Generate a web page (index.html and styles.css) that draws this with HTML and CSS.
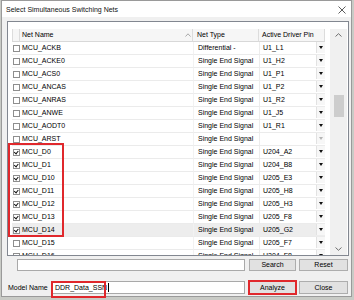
FILE: index.html
```html
<!DOCTYPE html>
<html>

<head>
  <title>Select Simultaneous Switching Nets</title>
  <link rel="stylesheet" href="styles.css">
</head>

<body>
  <div class="dialog">
    <div class="titlebar">
      <span class="title">Select Simultaneous Switching Nets</span>
      <svg class="close-x" width="8" height="8" viewBox="0 0 8 8"><path d="M0.5 0.5 L7.5 7.5 M7.5 0.5 L0.5 7.5" /></svg>
    </div>

    <div class="content">
      <div class="grid">
        <div class="list">
          <div class="row head">
            <div class="c chk"></div>
            <div class="c name">Net Name<svg class="sort" width="6" height="4" viewBox="0 0 6 4"><path d="M0.5 3.5 L3 0.8 L5.5 3.5" /></svg></div>
            <div class="c type">Net Type</div>
            <div class="c pin">Active Driver Pin</div>
          </div>

          <div class="row"><div class="c chk"><span class="box"></span></div><div class="c name">MCU_ACKB</div><div class="c type">Differential -</div><div class="c pin"><span>U1_L1</span><span class="drop"></span></div></div>
          <div class="row"><div class="c chk"><span class="box"></span></div><div class="c name">MCU_ACKE0</div><div class="c type">Single End Signal</div><div class="c pin"><span>U1_H2</span><span class="drop"></span></div></div>
          <div class="row"><div class="c chk"><span class="box"></span></div><div class="c name">MCU_ACS0</div><div class="c type">Single End Signal</div><div class="c pin"><span>U1_P1</span><span class="drop"></span></div></div>
          <div class="row"><div class="c chk"><span class="box"></span></div><div class="c name">MCU_ANCAS</div><div class="c type">Single End Signal</div><div class="c pin"><span>U1_P2</span><span class="drop"></span></div></div>
          <div class="row"><div class="c chk"><span class="box"></span></div><div class="c name">MCU_ANRAS</div><div class="c type">Single End Signal</div><div class="c pin"><span>U1_R2</span><span class="drop"></span></div></div>
          <div class="row"><div class="c chk"><span class="box"></span></div><div class="c name">MCU_ANWE</div><div class="c type">Single End Signal</div><div class="c pin"><span>U1_J5</span><span class="drop"></span></div></div>
          <div class="row"><div class="c chk"><span class="box"></span></div><div class="c name">MCU_AODT0</div><div class="c type">Single End Signal</div><div class="c pin"><span>U1_R1</span><span class="drop"></span></div></div>
          <div class="row"><div class="c chk"><span class="box"></span></div><div class="c name">MCU_ARST</div><div class="c type">Single End Signal</div><div class="c pin"><span></span><span class="drop off"></span></div></div>
          <div class="row"><div class="c chk"><span class="box on"></span></div><div class="c name">MCU_D0</div><div class="c type">Single End Signal</div><div class="c pin"><span>U204_A2</span><span class="drop"></span></div></div>
          <div class="row"><div class="c chk"><span class="box on"></span></div><div class="c name">MCU_D1</div><div class="c type">Single End Signal</div><div class="c pin"><span>U204_B8</span><span class="drop"></span></div></div>
          <div class="row"><div class="c chk"><span class="box on"></span></div><div class="c name">MCU_D10</div><div class="c type">Single End Signal</div><div class="c pin"><span>U205_E3</span><span class="drop"></span></div></div>
          <div class="row"><div class="c chk"><span class="box on"></span></div><div class="c name">MCU_D11</div><div class="c type">Single End Signal</div><div class="c pin"><span>U205_H8</span><span class="drop"></span></div></div>
          <div class="row"><div class="c chk"><span class="box on"></span></div><div class="c name">MCU_D12</div><div class="c type">Single End Signal</div><div class="c pin"><span>U205_H3</span><span class="drop"></span></div></div>
          <div class="row"><div class="c chk"><span class="box on"></span></div><div class="c name">MCU_D13</div><div class="c type">Single End Signal</div><div class="c pin"><span>U205_F8</span><span class="drop"></span></div></div>
          <div class="row selected"><div class="c chk"><span class="box on"></span></div><div class="c name">MCU_D14</div><div class="c type">Single End Signal</div><div class="c pin"><span>U205_G2</span><span class="drop"></span></div></div>
          <div class="row"><div class="c chk"><span class="box"></span></div><div class="c name">MCU_D15</div><div class="c type">Single End Signal</div><div class="c pin"><span>U205_F7</span><span class="drop"></span></div></div>
          <div class="row"><div class="c chk"><span class="box"></span></div><div class="c name">MCU_D16</div><div class="c type">Single End Signal</div><div class="c pin"><span>U204_F8</span><span class="drop"></span></div></div>
        </div>

        <div class="scrollbar">
          <div class="arrow"><svg width="7" height="4" viewBox="0 0 7 4"><path d="M0.5 3.5 L3.5 0.7 L6.5 3.5" /></svg></div>
          <div class="track"><div class="thumb"></div></div>
          <div class="arrow"><svg width="7" height="4" viewBox="0 0 7 4"><path d="M0.5 0.5 L3.5 3.3 L6.5 0.5" /></svg></div>
        </div>

        <!-- red note around the checked nets -->
        <div class="mark mark-checks"></div>
      </div>

      <div class="line search-line">
        <input class="field search-field" type="text">
        <button class="btn">Search</button>
        <button class="btn">Reset</button>
      </div>

      <div class="line model-line">
        <label class="model-label" for="model">Model Name</label>
        <div class="field model-field" id="model">DDR_Data_SSN<span class="caret"></span></div>
        <button class="btn flag">Analyze</button>
        <button class="btn">Close</button>
        <div class="mark mark-model"></div>
      </div>
    </div>
  </div>
</body>

</html>
```

FILE: styles.css
```css
* {
  box-sizing: border-box;
}

body {
  margin: 0;
  width: 354px;
  height: 300px;
  overflow: hidden;
  background-color: #c9cbc6;
  font-family: "Liberation Sans", Arial, sans-serif;
  font-size: 7px;
  color: #000;
}

.dialog {
  margin-left: 1px;
  width: 351px;
  height: 297px;
  background-color: #f0f0f0;
  border: 1px solid #9a9a9a;
}

/* title bar */
.titlebar {
  height: 16px;
  background-color: #fff;
  display: flex;
  align-items: center;
  justify-content: space-between;
  padding: 1px 5px 0 4px;
}

.title {
  color: #111;
}

.close-x path {
  stroke: #333;
  stroke-width: 0.8;
  fill: none;
}

.content {
  padding: 4px 2px 0 5px;
}

/* grid with nets */
.grid {
  position: relative;
  display: flex;
  height: 235px;
  padding-top: 7px;
  background-color: #fff;
  border: 1px solid #828790;
  overflow: hidden;
}

.list {
  width: 317px;
  margin-right: 5px;
  padding-left: 4px;
}

.row {
  display: grid;
  grid-template-columns: 8px 173px 66px 66px;
  height: 13px;
  line-height: 12px;
}

.row .c {
  border-bottom: 1px solid #ebebeb;
  white-space: nowrap;
  overflow: hidden;
}

.row .name {
  padding-left: 2px;
}

.row .type {
  padding-left: 4px;
  border-left: 1px solid #f2f2f2;
}

.row .pin {
  padding-left: 3px;
  border-left: 1px solid #ececec;
  display: flex;
  justify-content: space-between;
}

.row.selected .c {
  background-color: #ededed;
}

.head .c {
  background-color: #f6f6f6;
  border-bottom: 1px solid #d8d8d8;
  border-right: 1px solid #dcdcdc;
  border-left: none;
}

.head .chk {
  border-left: 1px solid #dcdcdc;
}

.head .name {
  display: flex;
  justify-content: space-between;
  align-items: center;
  padding-right: 1px;
}

.sort path {
  stroke: #888;
  stroke-width: 0.7;
  fill: none;
}

.chk {
  display: flex;
  align-items: center;
  padding-left: 1px;
}

.box {
  position: relative;
  width: 7px;
  height: 7px;
  border: 1px solid #8e8e8e;
  background-color: #fff;
}

.box.on::after {
  content: "";
  position: absolute;
  left: 1px;
  top: 0px;
  width: 3px;
  height: 1.6px;
  border-left: 1.2px solid #111;
  border-bottom: 1.2px solid #111;
  transform: rotate(-50deg);
  transform-origin: 1px 2px;
  top: 1px;
}

.drop {
  position: relative;
  width: 9px;
  height: 11px;
  margin-top: 0;
  background-color: #f7f7f7;
  border-left: 1px solid #e2e2e2;
}

.drop::after {
  content: "";
  position: absolute;
  left: 2px;
  top: 4px;
  border-left: 2.5px solid transparent;
  border-right: 2.5px solid transparent;
  border-top: 3px solid #111;
}

.drop.off::after {
  border-top-color: #b5b5b5;
}

/* scrollbar */
.scrollbar {
  width: 17px;
  height: 226px;
  display: flex;
  flex-direction: column;
  background-color: #f0f0f0;
}

.arrow {
  height: 12px;
  display: flex;
  align-items: center;
  justify-content: center;
}

.arrow path {
  stroke: #606060;
  stroke-width: 0.9;
  fill: none;
}

.track {
  flex: 1;
}

.thumb {
  margin: 54px auto 0;
  width: 10px;
  height: 22px;
  background-color: #cdcdcd;
}

/* red notes */
.mark {
  position: absolute;
  border: 2px solid #e0282c;
}

.mark-checks {
  left: 0;
  top: 121px;
  width: 56px;
  height: 94px;
}

.mark-model {
  left: 44px;
  top: 0;
  width: 55px;
  height: 17px;
}

/* bottom lines */
.line {
  position: relative;
  display: flex;
  align-items: flex-start;
}

.search-line {
  margin-top: 3px;
  padding-left: 10px;
}

.model-line {
  margin-top: 10px;
}

.field {
  height: 12px;
  background-color: #fff;
  border: 1px solid #a9a9a9;
  font-family: "Liberation Sans", Arial, sans-serif;
  font-size: 7px;
  padding: 0 2px;
}

.search-field {
  width: 228px;
  margin-right: 4px;
}

.model-label {
  width: 45px;
  padding-left: 1px;
  line-height: 13px;
}

.model-field {
  width: 193px;
  height: 13px;
  margin-right: 4px;
  line-height: 11px;
  display: flex;
  align-items: center;
}

.caret {
  width: 1px;
  height: 9px;
  margin-left: 1px;
  background-color: #000;
}

.btn {
  width: 47px;
  height: 12px;
  padding: 0;
  margin-right: 3px;
  background-color: #e1e1e1;
  border: 1px solid #adadad;
  font-family: "Liberation Sans", Arial, sans-serif;
  font-size: 7px;
  color: #000;
  line-height: 10px;
}

.btn:last-of-type {
  width: 49px;
  margin-right: 0;
}

.model-line .btn {
  height: 13px;
}

.btn.flag {
  outline: 2px solid #e0282c;
  outline-offset: -1px;
}
```
